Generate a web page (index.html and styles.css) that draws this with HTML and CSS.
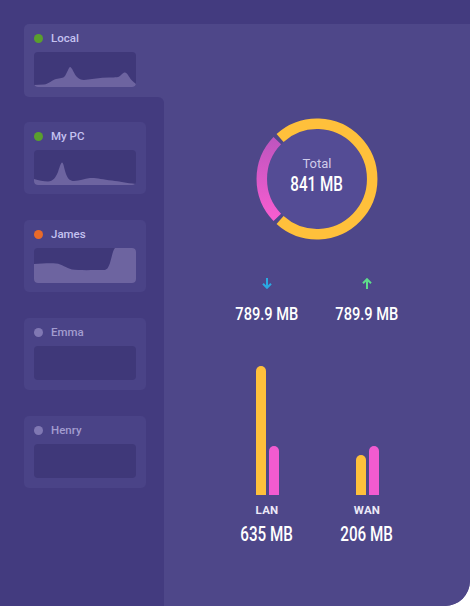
FILE: index.html
```html
<!DOCTYPE html>
<html>
<head>
<meta charset="utf-8">
<link rel="stylesheet" href="styles.css">
</head>
<body>
<div class="frame">
  <aside class="side">
    <div class="card card-active">
      <div class="card-head"><span class="dot dot-green"></span><span class="name">Local</span></div>
      <div class="chart">
        <svg viewBox="0 0 102 35" preserveAspectRatio="none"><path class="spark" d="M0,33 L10,32.5 C15,32 18,28 22,27 C26,26 29,26.5 31,24 C33,21 35,15 36,15 C38,15 40,22 43,25 C45,27 47,28 50,28 C58,27 66,25.5 75,25.5 C82,25.5 85,25.5 87,23 C89,21 90,20.5 91,20.5 C93,20.5 95,25 97,27.5 C99,30 101,31 102,32 L102,35 L0,35 Z"/></svg>
      </div>
    </div>
    <div class="side-list">
      <div class="card">
        <div class="card-head"><span class="dot dot-green"></span><span class="name">My PC</span></div>
        <div class="chart">
          <svg viewBox="0 0 102 35" preserveAspectRatio="none"><path class="spark" d="M0,29 C5,30.5 9,31.5 14,31.5 C19,31.5 22,27 24,22 C26,16 27,12.5 28,12.5 C29.5,12.5 30,18 32,24 C34,29 36,31 40,31 C46,31 50,28.5 56,28 C62,27.5 68,29.5 78,30.5 C86,31.5 92,33 102,34 L102,35 L0,35 Z"/></svg>
        </div>
      </div>
      <div class="card">
        <div class="card-head"><span class="dot dot-orange"></span><span class="name">James</span></div>
        <div class="chart">
          <svg viewBox="0 0 102 35" preserveAspectRatio="none"><path class="spark" d="M0,16 C8,15.5 16,15 22,15.5 C28,16 32,20 38,21.5 C44,22.5 60,22 70,22 C73,22 74,20 76,15 C78,8 79,2 81,0 L102,0 L102,35 L0,35 Z"/></svg>
        </div>
      </div>
      <div class="card card-off">
        <div class="card-head"><span class="dot dot-off"></span><span class="name">Emma</span></div>
        <div class="chart"></div>
      </div>
      <div class="card card-off">
        <div class="card-head"><span class="dot dot-off"></span><span class="name">Henry</span></div>
        <div class="chart"></div>
      </div>
    </div>
  </aside>
  <main class="main">
    <div class="donut">
      <svg width="122" height="122" viewBox="0 0 122 122">
        <defs>
          <linearGradient id="pinkg" x1="0" y1="0" x2="0" y2="1">
            <stop offset="0" stop-color="#bf55bf"/>
            <stop offset="1" stop-color="#f75dd0"/>
          </linearGradient>
        </defs>
        <circle cx="61" cy="61" r="50" fill="#544c95"/>
        <path d="M24.06,19.98 A55.2,55.2 0 1 1 24.06,102.02" fill="none" stroke="#ffc03b" stroke-width="10.5"/>
        <path d="M21.29,99.35 A55.2,55.2 0 0 1 21.29,22.65" fill="none" stroke="url(#pinkg)" stroke-width="10.5"/>
      </svg>
      <div class="donut-text">
        <span class="donut-label">Total</span>
        <span class="num num-lg">841 MB</span>
      </div>
    </div>
    <div class="row stats">
      <div class="col">
        <svg class="arrow" width="10" height="11" viewBox="0 0 10 11"><path d="M5,0 V9.5 M1,5.8 L5,9.8 L9,5.8" fill="none" stroke="#2aa9e2" stroke-width="2"/></svg>
        <span class="num num-md">789.9 MB</span>
      </div>
      <div class="col">
        <svg class="arrow" width="10" height="11" viewBox="0 0 10 11"><path d="M5,11 V1.5 M1,5.2 L5,1.2 L9,5.2" fill="none" stroke="#5edd8b" stroke-width="2"/></svg>
        <span class="num num-md">789.9 MB</span>
      </div>
    </div>
    <div class="row bars">
      <div class="col">
        <div class="pair">
          <div class="bar bar-y" style="height:129px"></div>
          <div class="bar bar-p" style="height:49px"></div>
        </div>
        <span class="bar-label">LAN</span>
        <span class="num num-lg">635 MB</span>
      </div>
      <div class="col">
        <div class="pair">
          <div class="bar bar-y" style="height:40px"></div>
          <div class="bar bar-p" style="height:49px"></div>
        </div>
        <span class="bar-label">WAN</span>
        <span class="num num-lg">206 MB</span>
      </div>
    </div>
  </main>
</div>
</body>
</html>
```
FILE: styles.css
```css
html, body {
  margin: 0;
  padding: 0;
  background: #ffffff;
}
.frame {
  width: 470px;
  height: 606px;
  box-sizing: border-box;
  padding-top: 24px;
  background: #433b7f;
  border-bottom-right-radius: 25px;
  display: flex;
  overflow: hidden;
  font-family: Roboto, "Liberation Sans", sans-serif;
}
.side {
  width: 140px;
  margin-left: 24px;
  flex: none;
  display: flex;
  flex-direction: column;
  background: linear-gradient(to right, transparent 130px, #4e4789 130px);
}
.card {
  width: 122px;
  height: 72px;
  box-sizing: border-box;
  padding: 9px 10px 10px;
  background: #4a4387;
  border-radius: 5px;
}
.card-active {
  width: 140px;
  height: 73px;
  background: #4e4789;
  border-radius: 5px 0 0 5px;
}
.card-head {
  height: 10px;
  display: flex;
  align-items: center;
  gap: 8px;
  margin-bottom: 9px;
}
.dot {
  width: 9px;
  height: 9px;
  border-radius: 50%;
  flex: none;
}
.dot-green { background: #5a9f2d; }
.dot-orange { background: #e86a29; }
.dot-off { background: #8078b3; }
.name {
  font-size: 11.5px;
  font-weight: 500;
  line-height: 10px;
  color: #c4c1f0;
}
.card-off .name { color: #a29ccf; }
.chart {
  width: 102px;
  height: 35px;
  background: #3f3879;
  border-radius: 4px;
  overflow: hidden;
}
.card-off .chart { height: 34px; }
.chart svg {
  display: block;
  width: 102px;
  height: 35px;
}
.spark { fill: #6d64a0; }
.side-list {
  flex: 1;
  margin-left: -24px;
  padding: 25px 0 0 24px;
  background: #433b7f;
  border-top-right-radius: 6px;
  display: flex;
  flex-direction: column;
  gap: 26px;
}
.main {
  flex: 1;
  background: #4e4789;
  border-bottom-right-radius: 25px;
  display: flex;
  flex-direction: column;
  align-items: center;
  padding-top: 94px;
}
.donut {
  position: relative;
  width: 122px;
  height: 122px;
}
.donut svg { display: block; }
.donut-text {
  position: absolute;
  inset: 0;
  display: flex;
  flex-direction: column;
  align-items: center;
  justify-content: center;
  padding-bottom: 7px;
  box-sizing: border-box;
}
.donut-label {
  font-size: 13px;
  line-height: 16px;
  color: #cfcbea;
  margin-bottom: 1px;
}
.num {
  display: inline-block;
  font-family: Roboto, "Liberation Sans", sans-serif;
  font-weight: 500;
  color: #ffffff;
  white-space: nowrap;
  transform: scaleX(0.76);
}
.num-lg {
  font-size: 20px;
  line-height: 22px;
}
.num-md {
  font-size: 18.5px;
  line-height: 20px;
  transform: scaleX(0.79);
}
.row {
  display: flex;
}
.col {
  width: 100px;
  display: flex;
  flex-direction: column;
  align-items: center;
}
.stats { margin-top: 38px; }
.arrow {
  display: block;
  margin-bottom: 15px;
}
.bars { margin-top: 42px; }
.pair {
  height: 129px;
  display: flex;
  align-items: flex-end;
  gap: 3px;
}
.bar {
  width: 10px;
  border-radius: 5px 5px 0 0;
}
.bar-y { background: #ffc03b; }
.bar-p { background: #f25bd0; }
.bar-label {
  margin-top: 8px;
  font-size: 11.5px;
  font-weight: 700;
  line-height: 14px;
  color: #ece9f7;
  letter-spacing: 0.2px;
}
.bars .num { margin-top: 6px; }
```
